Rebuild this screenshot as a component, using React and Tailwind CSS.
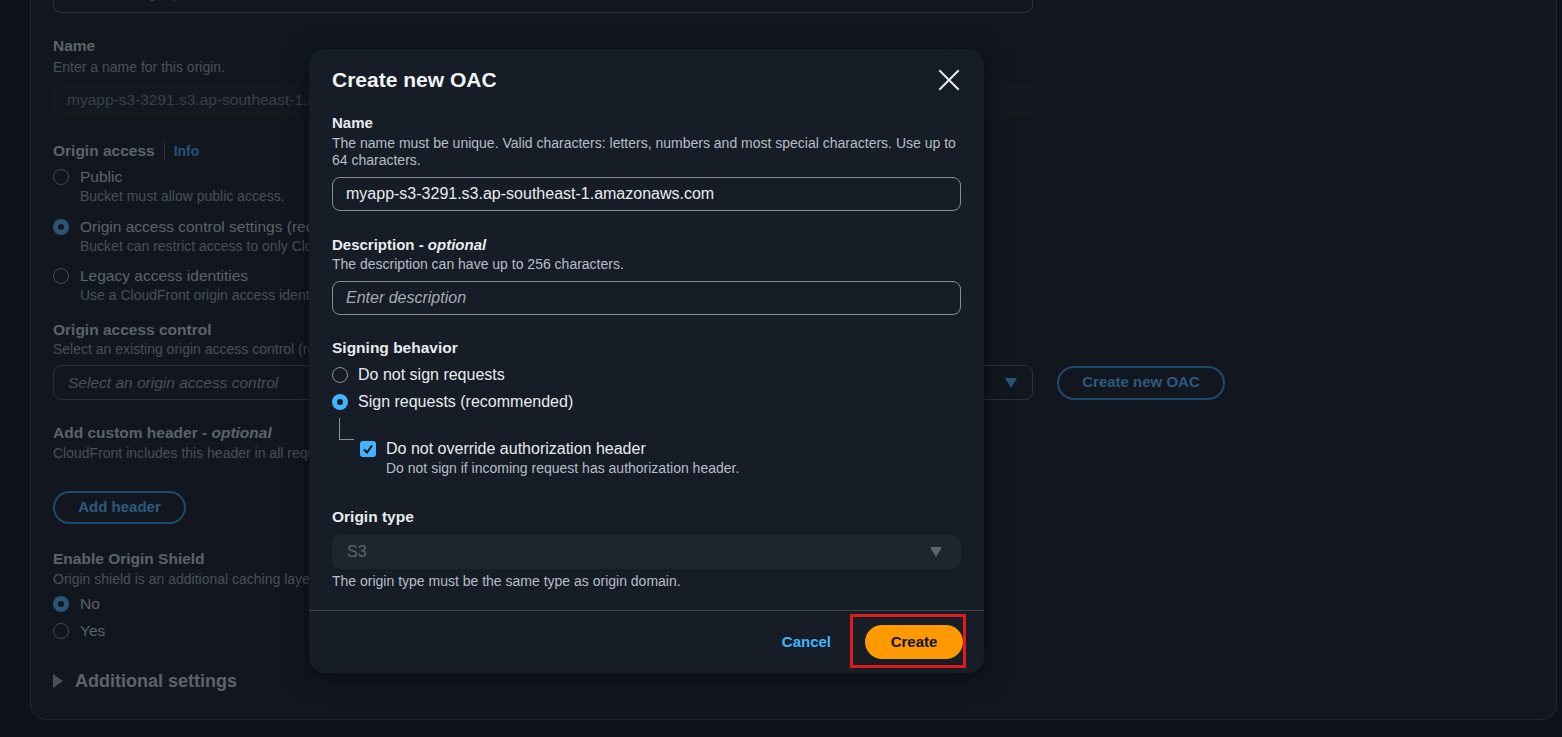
import React from 'react';

const font = { fontFamily: '"Liberation Sans", Arial, sans-serif' };

const Caret = ({ color, className = '' }) => (
    <svg width="12" height="10" viewBox="0 0 12 10" className={className}>
        <path d="M0 0 H12 L6 10 Z" fill={color} />
    </svg>
);

// dimmed page behind the modal
const BgRadio = ({ checked, label, desc, className = '' }) => (
    <div className={className}>
        <div className="flex items-center h-[20px]">
            {checked ? (
                <span className="w-[16px] h-[16px] rounded-full bg-[#2a5577] flex items-center justify-center">
                    <span className="w-[6px] h-[6px] rounded-full bg-[#12171f]" />
                </span>
            ) : (
                <span className="w-[16px] h-[16px] rounded-full border border-[#454b53]" />
            )}
            <span className="ml-[11px] text-[15.5px] text-[#5d636b] whitespace-nowrap">{label}</span>
        </div>
        {desc && <div className="ml-[27px] text-[14px] leading-[18px] text-[#4a5058] whitespace-nowrap">{desc}</div>}
    </div>
);

const Radio = ({ checked, label, className = '' }) => (
    <div className={`flex items-center h-[20px] ${className}`}>
        {checked ? (
            <span className="w-[16px] h-[16px] rounded-full bg-[#42b4ff] flex items-center justify-center">
                <span className="w-[6px] h-[6px] rounded-full bg-[#161d26]" />
            </span>
        ) : (
            <span className="w-[16px] h-[16px] rounded-full border-[1.5px] border-[#8c9199]" />
        )}
        <span className="ml-[10px] text-[16px] text-[#e9ebed]">{label}</span>
    </div>
);

const App = () => {
    return (
        <div style={font} className="relative w-full h-[737px] overflow-hidden bg-[#0e1319]">
            {/* BACKGROUND PAGE */}
            <div className="ml-[30px] mr-[5px] -mt-[40px] h-[760px] bg-[#12171f] border border-[#22282f] rounded-[16px] px-[22px] pt-[18px]">
                <div className="h-[34px] w-[980px] border border-[#2c323a] rounded-lg flex items-center px-[14px] text-[15px] italic text-[#3b4149]">
                    <span className="-mt-[6px]">Enter the origin path</span>
                </div>

                <div className="mt-[23px] text-[15.5px] leading-[20px] font-bold text-[#5d636b]">Name</div>
                <div className="mt-[2px] text-[14px] leading-[18px] text-[#4a5058]">Enter a name for this origin.</div>
                <div className="mt-[7px] h-[34px] w-[980px] rounded-lg bg-[#141920] flex items-center px-[14px] text-[15.5px] text-[#3a4048]">
                    myapp-s3-3291.s3.ap-southeast-1.amazonaws.com
                </div>

                <div className="mt-[24px] flex items-center h-[20px]">
                    <span className="text-[15.5px] font-bold text-[#5d636b]">Origin access</span>
                    <span className="mx-[9px] h-[18px] w-px bg-[#2c323a]" />
                    <span className="text-[14px] font-bold text-[#23557c]">Info</span>
                </div>
                <BgRadio className="mt-[6px]" label="Public" desc="Bucket must allow public access." />
                <BgRadio className="mt-[12px]" checked label="Origin access control settings (recommended)" desc="Bucket can restrict access to only CloudFront." />
                <BgRadio className="mt-[11px]" label="Legacy access identities" desc="Use a CloudFront origin access identity (OAI) to access the S3 bucket." />

                <div className="mt-[16px] text-[15.5px] leading-[20px] font-bold text-[#5d636b]">Origin access control</div>
                <div className="text-[14px] leading-[18px] text-[#4a5058]">Select an existing origin access control (recommended) or create a new control.</div>
                <div className="mt-[7px] flex items-center gap-[24px]">
                    <div className="h-[35px] w-[980px] border border-[#2c323a] rounded-lg flex items-center justify-between pl-[14px] pr-[15px]">
                        <span className="text-[15.5px] italic text-[#4a5058]">Select an origin access control</span>
                        <Caret color="#2a5577" />
                    </div>
                    <div className="h-[34px] w-[168px] border-2 border-[#1e4a6b] rounded-full flex items-center justify-center text-[15px] font-bold text-[#2a5a80]">
                        Create new OAC
                    </div>
                </div>

                <div className="mt-[23px] text-[15.5px] leading-[20px] font-bold text-[#5d636b]">
                    Add custom header - <span className="italic">optional</span>
                </div>
                <div className="mt-[1px] text-[14px] leading-[18px] text-[#4a5058]">CloudFront includes this header in all requests that it sends to your origin.</div>
                <div className="mt-[29px] h-[33px] w-[133px] border-2 border-[#1e4a6b] rounded-full flex items-center justify-center text-[15px] font-bold text-[#2a5a80]">
                    Add header
                </div>

                <div className="mt-[25px] text-[15.5px] leading-[20px] font-bold text-[#5d636b]">Enable Origin Shield</div>
                <div className="mt-[1px] text-[14px] leading-[18px] text-[#4a5058]">Origin shield is an additional caching layer that can help reduce the load on your origin and help protect its availability.</div>
                <BgRadio className="mt-[6px]" checked label="No" />
                <BgRadio className="mt-[7px]" label="Yes" />

                <div className="mt-[28px] flex items-center h-[24px]">
                    <svg width="10" height="14" viewBox="0 0 10 14">
                        <path d="M0 0 L10 7 L0 14 Z" fill="#4a5058" />
                    </svg>
                    <span className="ml-[12px] text-[18px] font-bold text-[#5d636b]">Additional settings</span>
                </div>
            </div>

            {/* MODAL */}
            <div className="absolute left-[309px] top-[49px] w-[675px] h-[624px] bg-[#161d26] rounded-[16px] shadow-[0_4px_24px_rgba(0,0,0,0.55)] flex flex-col">
                <div className="px-[23px] pt-[17px] pb-[20px] border-b border-[#414750]">
                    <div className="flex items-center justify-between h-[28px]">
                        <span className="text-[21px] font-bold text-[#f2f3f3]">Create new OAC</span>
                        <svg width="22" height="22" viewBox="0 0 22 22" className="mr-[1px]">
                            <path d="M2 2 L20 20 M20 2 L2 20" stroke="#e9ebed" strokeWidth="2" strokeLinecap="square" />
                        </svg>
                    </div>

                    <div className="mt-[19px] text-[15px] leading-[20px] font-bold text-[#e9ebed]">Name</div>
                    <div className="mt-[2px] text-[14px] leading-[17px] text-[#b6bec9]">
                        The name must be unique. Valid characters: letters, numbers and most special characters. Use up to 64 characters.
                    </div>
                    <div className="mt-[8px] h-[34px] border border-[#8c8c94] rounded-lg flex items-center px-[13px] text-[16px] text-[#e9ebed]">
                        myapp-s3-3291.s3.ap-southeast-1.amazonaws.com
                    </div>

                    <div className="mt-[24px] text-[15px] leading-[20px] font-bold text-[#e9ebed]">
                        Description - <span className="italic">optional</span>
                    </div>
                    <div className="mt-[1px] text-[14px] leading-[17px] text-[#b6bec9]">The description can have up to 256 characters.</div>
                    <div className="mt-[8px] h-[34px] border border-[#8c8c94] rounded-lg flex items-center px-[13px] text-[16px] italic text-[#a4abb4]">
                        Enter description
                    </div>

                    <div className="mt-[23px] text-[15.5px] leading-[20px] font-bold text-[#e9ebed]">Signing behavior</div>
                    <Radio className="mt-[7px]" label="Do not sign requests" />
                    <Radio className="mt-[7px]" checked label="Sign requests (recommended)" />
                    <div className="flex">
                        <div className="w-[28px]">
                            <div className="ml-[7px] mt-[6px] w-[15px] h-[22px] border-l border-b border-[#8c9199]" />
                        </div>
                        <div className="mt-[27px]">
                            <div className="flex items-center h-[20px]">
                                <span className="w-[16px] h-[16px] rounded-[3px] bg-[#42b4ff] flex items-center justify-center">
                                    <svg width="12" height="12" viewBox="0 0 12 12">
                                        <path d="M2 6.5 L5 9.5 L10 2.5" fill="none" stroke="#0f141a" strokeWidth="2" />
                                    </svg>
                                </span>
                                <span className="ml-[10px] text-[16px] text-[#e9ebed]">Do not override authorization header</span>
                            </div>
                            <div className="ml-[26px] mt-[1px] text-[14px] leading-[17px] text-[#b6bec9]">
                                Do not sign if incoming request has authorization header.
                            </div>
                        </div>
                    </div>

                    <div className="mt-[30px] text-[15.5px] leading-[20px] font-bold text-[#e9ebed]">Origin type</div>
                    <div className="mt-[8px] h-[34px] bg-[#1e252e] rounded-lg flex items-center justify-between pl-[15px] pr-[19px]">
                        <span className="text-[16px] text-[#5f6670]">S3</span>
                        <Caret color="#5f6670" />
                    </div>
                    <div className="mt-[4px] text-[14px] leading-[17px] text-[#b6bec9]">The origin type must be the same type as origin domain.</div>
                </div>

                {/* FOOTER */}
                <div className="relative flex-1 flex items-center justify-end pr-[21px]">
                    <span className="text-[15px] font-bold text-[#42b4ff] mr-[34px]">Cancel</span>
                    <div className="h-[34px] w-[98px] rounded-full bg-[#ff9900] flex items-center justify-center text-[15px] font-bold text-[#0f141a]">
                        Create
                    </div>
                    <div className="absolute left-[541px] top-[3px] w-[116px] h-[54px] border-[3px] border-[#e0191c]" />
                </div>
            </div>
        </div>
    );
};

export default App;
